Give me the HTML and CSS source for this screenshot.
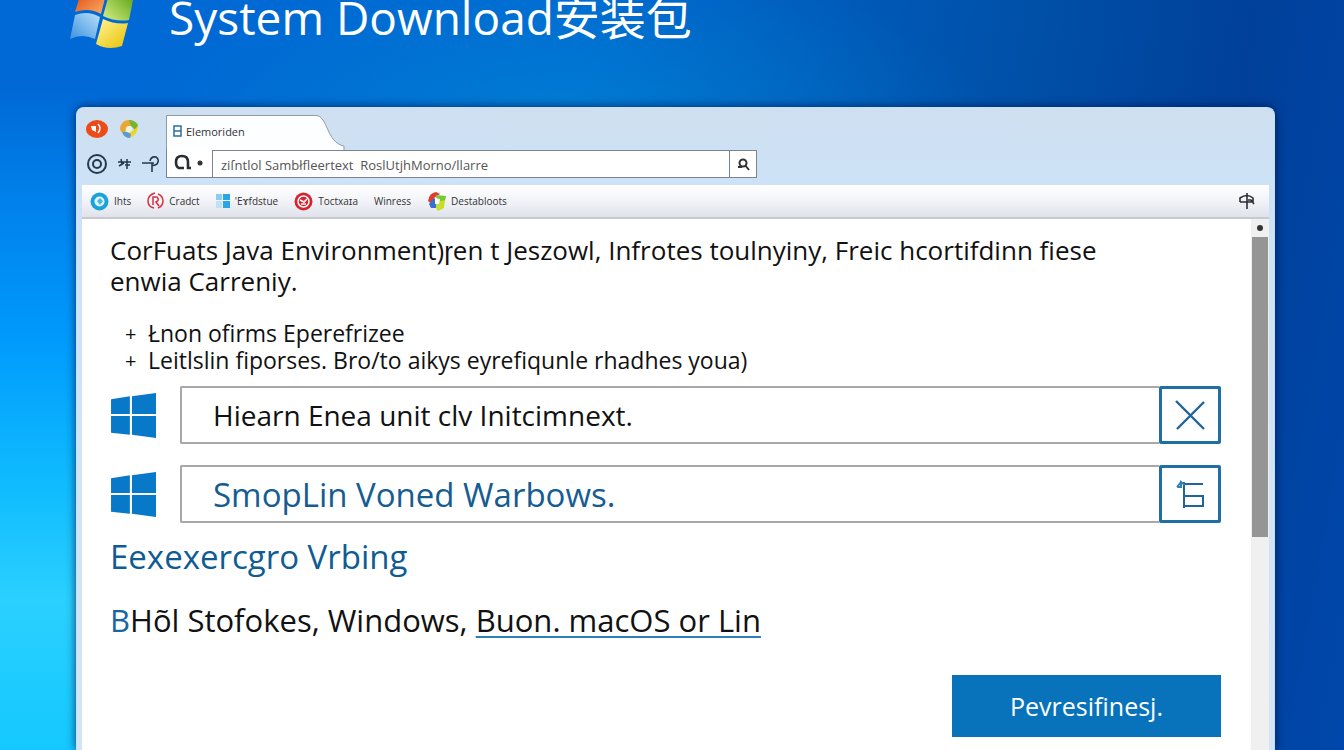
FILE: index.html
```html
<!DOCTYPE html>
<html lang="en">
<head>
    <meta charset="UTF-8">
    <meta name="viewport" content="width=device-width, initial-scale=1.0">
    <title>System Download安装包</title>
    <link rel="stylesheet" href="styles.css">
</head>
<body>
    <header class="desktop-header">
        <svg class="logo" viewBox="0 0 64 68" aria-hidden="true">
            <defs>
                <linearGradient id="red" x1="0" y1="0" x2="1" y2="1"><stop offset="0" stop-color="#d9400c"/><stop offset="1" stop-color="#ffb066"/></linearGradient>
                <linearGradient id="green" x1="1" y1="0" x2="0" y2="1"><stop offset="0" stop-color="#4c9a06"/><stop offset="1" stop-color="#d8ef86"/></linearGradient>
                <linearGradient id="blue" x1="1" y1="0" x2="0" y2="1"><stop offset="0" stop-color="#b9e0fa"/><stop offset="1" stop-color="#3c92de"/></linearGradient>
                <linearGradient id="yellow" x1="0" y1="0" x2="1" y2="1"><stop offset="0" stop-color="#fff59a"/><stop offset="1" stop-color="#e8c000"/></linearGradient>
            </defs>
            <path fill="url(#red)" d="M12 8Q24 1 37 9L31 33Q19 26 5 31Z"/>
            <path fill="url(#green)" d="M40 10Q52 16 65 9L59 39Q46 41 33 35Z"/>
            <path fill="url(#blue)" d="M5 34Q18 29 30 36L25 58Q12 52 0 58Z"/>
            <path fill="url(#yellow)" d="M33 38Q46 44 58 42L52 65Q38 70 26 63Z"/>
        </svg>
        <h1>System Download安装包</h1>
    </header>

    <div class="window">
        <div class="chrome">
            <div class="nav-icons">
                <div class="icon-row">
                    <svg width="23" height="20" viewBox="0 0 23 20"><ellipse cx="11" cy="10" rx="11" ry="9" fill="#ee4a18"/><path d="M5 7l5 0v6l-4-2z" fill="#fff"/><path d="M12 5q4 4 0 9" fill="none" stroke="#fff" stroke-width="1.5"/></svg>
                    <svg width="20" height="20" viewBox="0 0 20 20"><path d="M1 9Q3 1 10 1l4 5-7 3-1 5Q1 14 1 9z" fill="#e9a830"/><path d="M10 1q6 0 9 5l-2 6-5-5z" fill="#77b62c"/><path d="M19 7q0 8-8 12l-1-5 5-3z" fill="#f0d425"/><path d="M11 19q-6 0-8-6l5 0 4 2z" fill="#5a9bd2"/><circle cx="10" cy="10" r="3" fill="#eef5dc"/></svg>
                </div>
                <div class="icon-row tools">
                    <svg width="22" height="22" viewBox="0 0 22 22" fill="none" stroke="#26384e" stroke-width="2"><circle cx="11" cy="11" r="9"/><circle cx="11" cy="11" r="4"/></svg>
                    <svg width="14" height="14" viewBox="0 0 14 14" fill="none" stroke="#26384e" stroke-width="1.5"><path d="M0 5h13M3 2l1 5M1 9l5-3M9 2v10M7 8h5"/></svg>
                    <svg width="18" height="18" viewBox="0 0 18 18" fill="none" stroke="#26384e" stroke-width="1.6"><path d="M0 8h12M10 8v9M8 6q1-5 6-4 4 3 1 7-3 2-5 1"/></svg>
                </div>
            </div>
            <div class="tab-area">
                <div class="tab">
                    <svg class="tab-shape" viewBox="0 0 180 36" preserveAspectRatio="none"><path d="M0.5 36V0.5H150C162 1 160 28 178 32V36" fill="#fdfeff" stroke="#8d99a6"/></svg>
                    <span class="tab-label">
                        <svg width="9" height="12" viewBox="0 0 9 12" fill="none" stroke="#2b6f9e" stroke-width="1.5"><path d="M1 1h7v10H1zM1 6h7"/></svg>
                        Elemoriden
                    </span>
                </div>
                <form class="address">
                    <span class="engine">
                        <svg width="32" height="18" viewBox="0 0 32 18"><path d="M6 14Q3 13 3 8Q3 2 9 2Q15 2 15 8V14H18M5 14H11" fill="none" stroke="#292d31" stroke-width="2.6"/><circle cx="27" cy="9" r="2.5" fill="#333"/></svg>
                    </span>
                    <input type="text" aria-label="Address" value="ziſntlol Sambłfleertext  RoslUtjhMorno/llarre">
                    <button type="button" aria-label="Search">
                        <svg width="13" height="13" viewBox="0 0 13 13" fill="none" stroke="#333" stroke-width="2"><circle cx="6" cy="5" r="3.500"/><path d="M1 9h4M8 7l4 5"/></svg>
                    </button>
                </form>
            </div>
        </div>

        <nav class="bookmarks">
            <a href="#"><svg width="19" height="19" viewBox="0 0 19 19"><circle cx="9.500" cy="9.500" r="9" fill="#1aa2da"/><circle cx="9.500" cy="9.500" r="5" fill="#e2f6fd"/><path d="M7 9l3-3 3 3-3 4z" fill="#4db8df"/></svg>Ihts</a>
            <a href="#"><svg width="17" height="18" viewBox="0 0 17 18" fill="none" stroke="#d93040" stroke-width="1.5"><path d="M7 16Q1 15 1 9T8 1M11 2q5 2 5 7t-5 7"/><path d="M6 13V5h4q3 3-1 5l3 4"/></svg>Cradct</a>
            <a href="#"><svg width="14" height="14" viewBox="0 0 14 14"><path d="M0 0h6v6H0z" fill="#8accf4"/><path d="M7 0h7v6H7zM7 7h7v7H7z" fill="#2aa5e6"/><path d="M0 7h6v7H0z" fill="#bfe2f7"/></svg>'Eɤfdstue</a>
            <a href="#"><svg width="19" height="19" viewBox="0 0 19 19"><circle cx="9.500" cy="9.500" r="9" fill="#d8232e"/><circle cx="9.500" cy="9.500" r="5.500" fill="none" stroke="#fff" stroke-width="1.500"/><path d="M6 8l4 2 3-3M7 12h5" stroke="#fff" stroke-width="1.500" fill="none"/></svg>Toctxaɪa</a>
            <a href="#">Winress</a>
            <a href="#"><svg width="19" height="19" viewBox="0 0 19 19"><path d="M1 9Q2 1 9 0l4 2-6 4v8z" fill="#e03c30"/><path d="M9 3l10 1-1 5-8 1z" fill="#78c832"/><path d="M2 12l5-6 3 2-1 8-5 0z" fill="#3a6fd0"/><path d="M10 10l8-2-1 8-6 3-2-3z" fill="#c8e020"/><path d="M8 6l5 1-1 5-4 0z" fill="#fff"/></svg>Destabloots</a>
            <a href="#" class="pin" aria-label="Pin"><svg width="16" height="18" viewBox="0 0 16 18" fill="none" stroke="#2b2f35" stroke-width="1.6"><path d="M8 1v16M1 10V6q7-5 13 0v4M1 10h13M9 8h3l3 4"/></svg></a>
        </nav>

        <div class="viewport">
            <main class="page">
                <p class="intro">CorFuats Java Environment)ɼen t Jeszowl, Infrotes toulnyiny, Freic hcortifdinn fiese<br>enwia Carreniy.</p>
                <ul class="notes">
                    <li>Łnon ofirms Eperefrizee</li>
                    <li>Leitlslin fiporses. Bro/to aikys eyrefiqunle rhadhes youa)</li>
                </ul>

                <div class="option">
                    <svg class="win" viewBox="0 0 44 44" fill="#0878c8"><path d="M1 7L19 4V21H1zM21 4L44 1V21H21zM1 23H19V41L1 39zM21 23H44V44L21 41z"/></svg>
                    <input type="text" aria-label="First option" value="Hiearn Enea unit clv Initcimnext.">
                    <button type="button" aria-label="Clear"><svg width="32" height="32" viewBox="0 0 32 32" fill="none" stroke="#1f6596" stroke-width="2.4"><path d="M2 2L30 30M30 3L3 30"/></svg></button>
                </div>
                <div class="option blue">
                    <svg class="win" viewBox="0 0 44 44" fill="#0878c8"><path d="M1 7L19 4V21H1zM21 4L44 1V21H21zM1 23H19V41L1 39zM21 23H44V44L21 41z"/></svg>
                    <input type="text" aria-label="Second option" value="SmopLin Voned Warbows.">
                    <button type="button" aria-label="Browse"><svg width="32" height="32" viewBox="0 0 32 32" fill="none" stroke="#1f6596" stroke-width="2"><path d="M10 6H29M10 4V30M10 18H29V28H10"/><path d="M3 9h4V4l4 3M3 9l4-5" stroke="#2f80b5"/></svg></button>
                </div>

                <h2>Eexexercgro Vrbing</h2>
                <p class="platforms"><span class="accent">B</span>Hõl Stofokes, Windows, <a href="#">Buon. macOS or Lin</a></p>
                <button type="button" class="proceed">Pevresifinesj.</button>
            </main>
            <div class="scrollbar">
                <span class="scroll-up"></span>
                <span class="thumb"></span>
            </div>
        </div>
    </div>
</body>
</html>
```

FILE: styles.css
```css
* {
    box-sizing: border-box;
}
body {
    margin: 0;
    height: 100vh;
    overflow: hidden;
    display: flex;
    flex-direction: column;
    font-family: "Open Sans", "Noto Sans CJK SC", sans-serif;
    color: #111;
    /* sky glow on the left edge, soft light behind the title, dark blue right */
    background:
        linear-gradient(transparent 12%, #0080ea 26%, #009afc 45%, #10bcff 65%, #2ad0ff 80%, #14c8ff) 0 0 / 100px 100% no-repeat,
        radial-gradient(ellipse 420px 160px at 42% 16%, rgba(0, 145, 215, 0.5), transparent),
        linear-gradient(100deg, #0069d6, #0068d0 40%, #0050a8 70%, #00409a 85%, #0047ab);
}
svg {
    display: block;
    flex-shrink: 0;
}
input, button {
    font-family: inherit;
    margin: 0;
}

.desktop-header {
    display: flex;
    align-items: flex-end;
    gap: 35px;
    height: 107px;
    flex-shrink: 0;
    padding: 0 70px 58px;
}
.logo {
    width: 64px;
    height: 68px;
}
.desktop-header h1 {
    margin: 0;
    color: #fff;
    font-size: 46px;
    font-weight: 400;
    line-height: 64px;
    white-space: nowrap;
}

.window {
    flex: 1;
    min-height: 0;
    display: flex;
    flex-direction: column;
    margin: 0 69px 0 76px;
    padding: 0 5px;
    background: linear-gradient(#cfdff0, #cde2f6 70px, #d5e4f5);
    border: 1px solid #c3e2f8;
    border-bottom: 0;
    border-radius: 8px 8px 0 0;
    box-shadow: 0 0 10px rgba(0, 20, 70, 0.8);
}

.chrome {
    display: flex;
    height: 77px;
    padding: 7px 4px 0;
}
.nav-icons {
    width: 80px;
}
.icon-row {
    display: flex;
    align-items: center;
    gap: 10px;
    height: 28px;
}
.tools {
    height: 42px;
}
.tab {
    position: relative;
    width: 180px;
    height: 35px;
}
.tab-shape {
    width: 100%;
    height: 100%;
}
.tab-label {
    position: absolute;
    inset: 0 auto auto 7px;
    display: flex;
    align-items: center;
    gap: 4px;
    height: 32px;
    font-size: 11px;
    color: #333;
}
.tab-area {
    flex: 0 1 591px;
}
.address {
    display: flex;
    height: 28px;
    background: #fff;
    border: 1px solid #7b858f;
    border-top: 0;
}
.engine {
    width: 45px;
    padding: 4px 6px;
}
.address input {
    flex: 1;
    min-width: 0;
    border: 1px solid #7b858f;
    border-width: 1px 1px 0;
    padding: 2px 8px 0;
    font-size: 13px;
    color: #555;
}
.address button {
    width: 26px;
    display: grid;
    place-items: center;
    padding: 0;
    background: #fff;
    border: 0;
    border-top: 1px solid #7b858f;
}

.bookmarks {
    display: flex;
    align-items: center;
    gap: 16px;
    height: 34px;
    flex-shrink: 0;
    padding: 0 14px 0 8px;
    background: linear-gradient(#fff, #f5f6fa 40%, #e0e3eb);
    border-bottom: 2px solid #c9c9d0;
}
.bookmarks a {
    display: flex;
    align-items: center;
    gap: 5px;
    font-size: 10px;
    color: #333;
    text-decoration: none;
}
.bookmarks .pin {
    margin-left: auto;
}

.viewport {
    flex: 1;
    min-height: 0;
    display: flex;
    background: #fff;
}
.page {
    flex: 1;
    min-width: 0;
    padding: 16px 30px 0 28px;
}
.intro {
    margin: 0 0 23px;
    font-size: 26px;
    line-height: 31px;
}
.notes {
    margin: 0 0 12px;
    padding: 0 0 0 15px;
    list-style: none;
    font-size: 23px;
    line-height: 27px;
}
.notes li {
    display: flex;
}
.notes li::before {
    content: "+";
    width: 23px;
    font-size: 20px;
}

.option {
    display: flex;
    align-items: center;
    height: 58px;
}
.option + .option {
    margin-top: 21px;
}
.win {
    width: 46px;
    height: 46px;
    margin-right: 24px;
}
.option input {
    flex: 1;
    min-width: 0;
    height: 58px;
    padding: 0 31px;
    border: 2px solid #a8a8a8;
    border-right: 0;
    border-radius: 2px 0 0 2px;
    font-size: 28px;
    color: #111;
}
.option.blue input {
    font-size: 33px;
    color: #155d91;
}
.option button {
    display: grid;
    place-items: center;
    width: 62px;
    height: 58px;
    padding: 0;
    background: #fff;
    border: 3px solid #1f6fa5;
    border-radius: 2px;
}

h2 {
    margin: 16px 0 27px;
    font-size: 33px;
    font-weight: 400;
    line-height: 36px;
    color: #0f5c94;
}
.platforms {
    margin: 0 0 37px;
    font-size: 31px;
    line-height: 36px;
}
.platforms .accent {
    color: #17679e;
}
.platforms a {
    color: inherit;
    text-decoration: underline #2f7fbd 2px;
    text-underline-offset: 4px;
}
.proceed {
    display: block;
    width: 269px;
    height: 62px;
    margin-left: auto;
    border: 0;
    background: #0873bb;
    color: #fff;
    font-size: 25px;
}

.scrollbar {
    width: 18px;
    background: #f0f0f0;
    display: flex;
    flex-direction: column;
    align-items: center;
}
.scroll-up {
    width: 6px;
    height: 6px;
    margin: 6px;
    border-radius: 50%;
    background: #333;
}
.thumb {
    width: 16px;
    height: 300px;
    background: #959595;
}
```
